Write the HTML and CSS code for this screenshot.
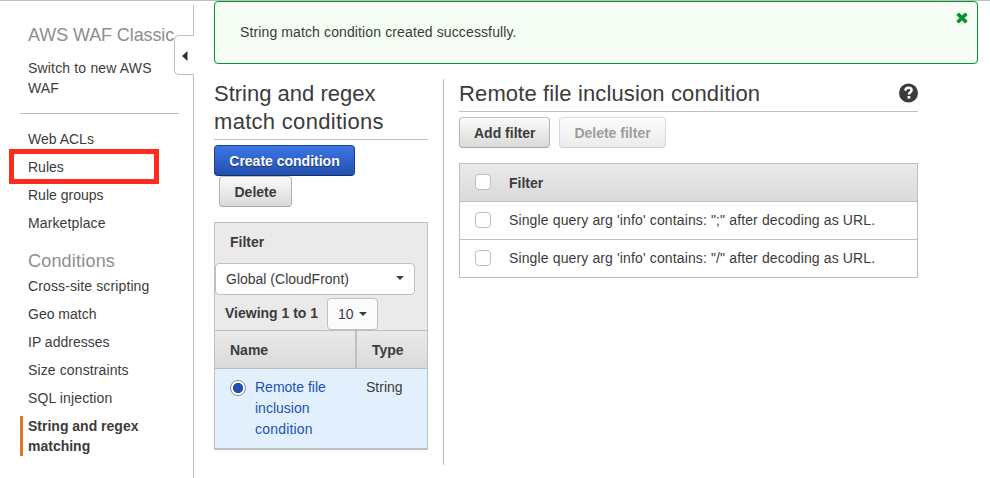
FILE: index.html
```html
<!DOCTYPE html>
<html lang="en">
<head>
<meta charset="utf-8">
<title>AWS WAF Classic</title>
<link rel="stylesheet" href="styles.css">
</head>
<body>
<div class="app">
  <aside class="sidebar">
    <h2 class="side-title">AWS WAF Classic</h2>
    <a class="switch">Switch to new AWS<br>WAF</a>
    <nav class="nav nav-main">
      <a>Web ACLs</a>
      <a class="marked">Rules</a>
      <a>Rule groups</a>
      <a class="loose">Marketplace</a>
    </nav>
    <h2 class="side-title group">Conditions</h2>
    <nav class="nav">
      <a class="loose">Cross-site scripting</a>
      <a>Geo match</a>
      <a>IP addresses</a>
      <a class="loose">Size constraints</a>
      <a class="loose">SQL injection</a>
      <a class="active">String and regex<br>matching</a>
    </nav>
    <div class="collapse"><svg width="6" height="10" viewBox="0 0 6 10"><path d="M5.5 0v10L0 5z" fill="#333"/></svg></div>
  </aside>
  <main class="main">
    <div class="banner">
      <span class="loose">String match condition created successfully.</span>
      <svg class="close" width="12" height="12" viewBox="0 0 12 12"><path d="M2.9 3 9.1 9M9.1 3 2.9 9" stroke="#009530" stroke-width="3.7" stroke-linecap="square"/></svg>
    </div>
    <div class="columns">
      <section class="list">
        <h1>String and regex<br><span>match conditions</span></h1>
        <div class="actions">
          <button class="btn primary">Create condition</button>
          <button class="btn delete">Delete</button>
        </div>
        <div class="panel">
          <div class="panel-filter">Filter</div>
          <div class="select wide"><span>Global (CloudFront)</span><i class="caret"></i></div>
          <div class="paging"><b>Viewing 1 to 1</b><div class="select small"><span>10</span><i class="caret"></i></div></div>
          <div class="row head"><div class="name">Name</div><div class="type">Type</div></div>
          <div class="row selected">
            <div class="name"><i class="radio"></i><a>Remote file<br>inclusion<br><span class="spread">condition</span></a></div>
            <div class="type">String</div>
          </div>
        </div>
      </section>
      <section class="detail">
        <div class="detail-head">
          <h1>Remote file inclusion condition</h1>
          <svg class="help" width="19" height="20" viewBox="0 0 19 20"><circle cx="9.5" cy="10" r="9.5" fill="#3b3b3b"/><path d="M6.3 7.6C6.6 5.6 7.8 4.7 9.5 4.7c1.8 0 3.1 1 3.1 2.5 0 2-2.7 2-2.7 4.2" fill="none" stroke="#fff" stroke-width="2.5"/><path d="M8.5 13h2.8v2.6H8.5z" fill="#fff"/></svg>
        </div>
        <div class="actions">
          <button class="btn">Add filter</button>
          <button class="btn" disabled>Delete filter</button>
        </div>
        <div class="filters">
          <div class="frow fhead"><i class="check"></i><span>Filter</span></div>
          <div class="frow"><i class="check"></i><span>Single query arg 'info' contains: ";" after decoding as URL.</span></div>
          <div class="frow"><i class="check"></i><span>Single query arg 'info' contains: "/" after decoding as URL.</span></div>
        </div>
      </section>
    </div>
  </main>
</div>
</body>
</html>
```
FILE: styles.css
```css
*, *::after { box-sizing: border-box; }
body {
  margin: 0;
  background: #fff;
  color: #3b3b3b;
  font: 14px/20px "Liberation Sans", Arial, sans-serif;
  overflow: hidden;
}
h1, h2 { margin: 0; font-weight: 400; }
h1 { padding-top: 1px; font-size: 22px; line-height: 28px; white-space: nowrap; }
svg { display: block; }
.loose { letter-spacing: .12px; }
.spread { letter-spacing: .2px; }
.app { display: flex; height: 478px; border-top: 1px solid #bfbfbf; }

.sidebar {
  position: relative;
  width: 194px;
  height: 473px;
  flex: none;
  margin-top: 4px;
  padding: 19px 0 0 20px;
  border-right: 1px solid #bfbfbf;
}
.side-title { margin-left: 8px; font-size: 18px; line-height: 22px; letter-spacing: -.1px; color: #8e8e8e; white-space: nowrap; }
.switch { display: block; width: 159px; height: 68px; padding: 12px 0 0 8px; border-bottom: 1px solid #bfbfbf; letter-spacing: .17px; }
.nav { display: flex; flex-direction: column; gap: 8px; }
.nav a { position: relative; padding-left: 8px; }
.nav-main { margin-top: 15px; }
.group { margin-top: 17px; margin-bottom: 4px; letter-spacing: .2px; }
.nav .active { padding-left: 5px; border-left: 3px solid #e07624; font-weight: 700; }
.marked::after {
  content: "";
  position: absolute;
  left: -11.5px;
  top: -8px;
  width: 150px;
  height: 35px;
  border: 5px solid #fe2c1e;
}
.collapse {
  position: absolute;
  top: 30px;
  right: -1px;
  width: 20px;
  height: 40px;
  padding: 15px 0 0 7px;
  background: #fff;
  border: 1px solid #bfbfbf;
  border-right: 0;
  border-radius: 5px 0 0 5px;
}

.main { width: 764px; margin-left: 20px; }
.banner {
  display: flex;
  justify-content: space-between;
  height: 63px;
  padding: 20px 9px 0 25px;
  border: 1px solid #009530;
  border-radius: 4px;
  background: #f5fdf5;
}
.close { margin-top: -10px; }
.columns { display: flex; margin-top: 15px; }
.list { width: 230px; height: 386px; border-right: 1px solid #bfbfbf; }
.list h1 { width: 214px; height: 61px; border-bottom: 1px solid #bfbfbf; }
.list h1 span { letter-spacing: .3px; }
.list .actions { display: flex; flex-direction: column; align-items: flex-start; margin-top: 5px; }
.btn {
  height: 31px;
  padding: 1px 14px 0;
  border: 1px solid #a9a9a9;
  border-color: #bfbfbf #b3b3b3 #a6a6a6;
  border-radius: 4px;
  background: linear-gradient(#fafafa, #dadada);
  color: #3b3b3b;
  font: bold 14px/28px "Liberation Sans", Arial, sans-serif;
  white-space: nowrap;
}
.btn:disabled { opacity: .5; }
.primary {
  width: 141px;
  border-color: #1f4695 #1b3f88 #16336f;
  background: linear-gradient(#3c76e6, #2450ad);
  color: #fff;
  text-shadow: 0 1px 1px #16336f;
}
.delete { width: 73px; margin-left: 5px; }

.panel { width: 214px; height: 228px; margin-top: 15px; border: 1px solid #bfbfbf; border-bottom-width: 2px; background: #eaeaea; }
.panel-filter { height: 40px; padding: 9px 15px; font-weight: 700; }
.select {
  display: flex;
  align-items: center;
  justify-content: space-between;
  height: 32px;
  padding: 0 10px;
  border: 1px solid #bfbfbf;
  border-radius: 4px;
  background: #fff;
}
.wide { width: 200px; }
.small { width: 51px; background: #fbfbfb; }
.caret { border: 4px solid transparent; border-top-color: #3b3b3b; border-bottom: 0; }
.wide .caret { margin-top: -3px; }
.paging { display: flex; justify-content: space-between; width: 163px; height: 35px; padding: 3px 0 0 10px; }
.paging b { line-height: 30px; }
.row { display: flex; }
.name { width: 142px; flex: none; }
.head { height: 39px; border: solid #bfbfbf; border-width: 1px 0; background: linear-gradient(#eaeaea, #dadada); line-height: 38px; font-weight: 700; }
.head .name { padding-left: 15px; border-right: 2px solid #bfbfbf; }
.head .type { padding-left: 15px; }
.selected { height: 79px; background: #e2f0fe; line-height: 21px; padding-top: 8px; }
.selected .name { display: flex; color: #2152b4; }
.selected .type { padding-left: 9px; }
.radio {
  width: 16px;
  height: 16px;
  margin: 3px 9px 0 15px;
  border: 1px solid #8b8b8b;
  border-radius: 50%;
  background: radial-gradient(circle, #2150af 4.8px, #fff 5.4px);
}

.detail { width: 459px; margin-left: 15px; }
.detail-head { display: flex; justify-content: space-between; height: 33px; border-bottom: 1px solid #bfbfbf; }
.detail-head h1 { letter-spacing: .13px; }
.help { margin-top: 4px; }
.detail .actions { display: flex; gap: 9px; margin-top: 5px; }
.detail .btn:first-child { width: 91px; }
.detail .btn:last-child { width: 107px; }
.filters { margin-top: 15px; border: 1px solid #bfbfbf; }
.frow { display: flex; height: 38px; padding: 8px 15px 0; border-top: 1px solid #bfbfbf; letter-spacing: .13px; }
.fhead { height: 37px; padding-top: 9px; border: 0; background: linear-gradient(#eaeaea, #dadada); font-weight: 700; letter-spacing: 0; }
.check { width: 16px; height: 16px; margin: 2px 18px 0 0; border: 1px solid #bfbfbf; border-radius: 4px; background: #fff; }
.fhead .check { margin-top: 1px; }
```
